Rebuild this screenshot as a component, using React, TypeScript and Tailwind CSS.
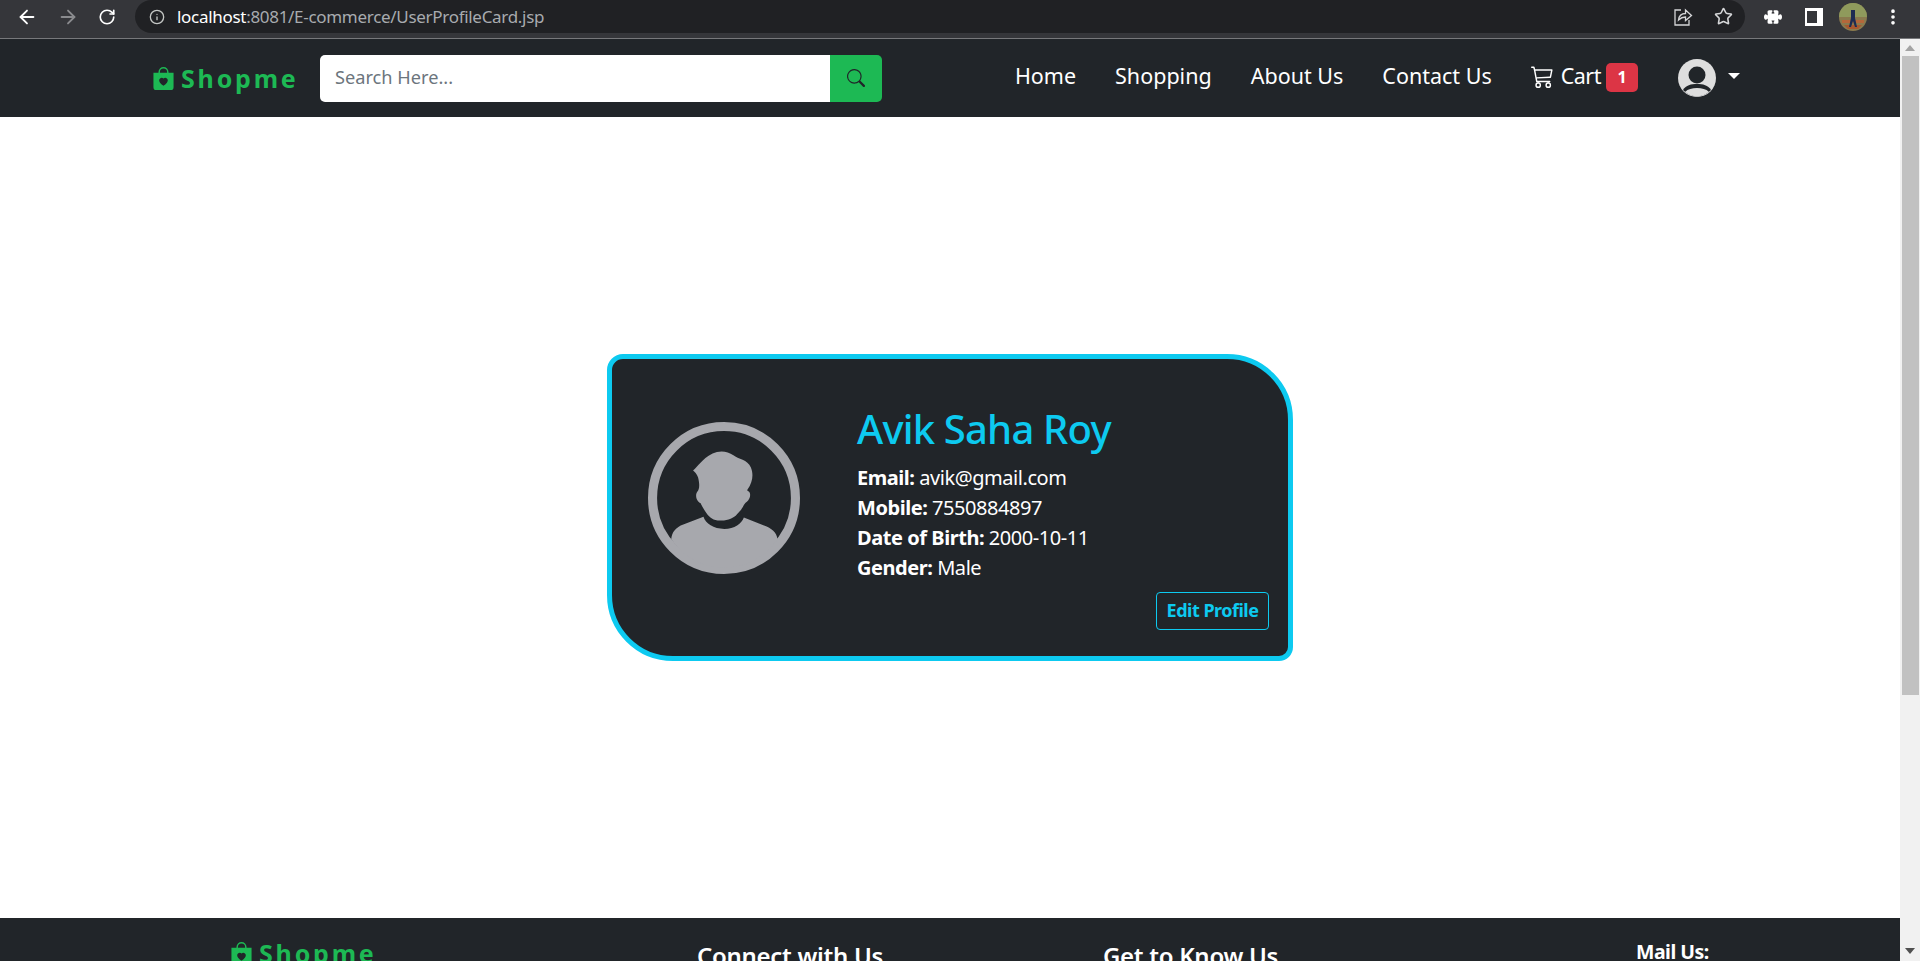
import { ArrowLeft, ArrowRight, RotateCw, Info, Star, EllipsisVertical } from 'lucide-react';
import { BsBagHeartFill, BsCart3, BsPuzzleFill, BsSearch } from 'react-icons/bs';

const links = ['Home', 'Shopping', 'About Us', 'Contact Us'];

const details = [
  { label: 'Email:', value: 'avik@gmail.com' },
  { label: 'Mobile:', value: '7550884897' },
  { label: 'Date of Birth:', value: '2000-10-11' },
  { label: 'Gender:', value: 'Male' },
];

function BrowserBar() {
  return (
    <div className="h-[39px] bg-[#35363a] border-b border-[#77787b] text-white shrink-0">
      <div className="h-[33px] flex items-center">
        <div className="flex items-center gap-[19px] pl-4 pr-[19px]">
          <ArrowLeft size={22} strokeWidth={2} />
          <ArrowRight size={22} strokeWidth={2} className="text-[#8a8b8e]" />
          <RotateCw size={18} strokeWidth={2.2} />
        </div>
        <div className="h-[33px] w-[1610px] rounded-full bg-[#202124] flex items-center pl-[14px] pr-[12px]">
          <Info size={16} className="text-[#c4c7c5] mr-[12px]" />
          <span className="text-[17px] tracking-[-0.3px]">
            localhost<span className="text-[#a8abaf]">:8081/E-commerce/UserProfileCard.jsp</span>
          </span>
          <div className="ml-auto flex items-center gap-[21px] text-[#d5d6d8]">
            <svg width="20" height="20" viewBox="0 0 20 20" fill="none" stroke="currentColor" strokeWidth="1.3">
              <path d="M8 3H2v15h14v-5" />
              <path d="M5.5 13c.5-4 3-6.5 7-6.5V3l6 5.5-6 5V10c-3 0-5 1-7 3z" />
            </svg>
            <Star size={19} strokeWidth={2} />
          </div>
        </div>
        <div className="flex items-center ml-[19px]">
          <BsPuzzleFill size={18} />
          <div className="ml-[23px] w-[18px] h-[18px] bg-white flex items-stretch">
            <div className="bg-[#35363a] w-[10px] my-[3px] ml-[2px]" />
          </div>
          <svg width="28" height="28" viewBox="0 0 28 28" className="ml-[16px]">
            <circle cx="14" cy="14" r="14" fill="#8a7a4e" />
            <path d="M0 14a14 14 0 0 1 28 0z" fill="#8f9a5c" />
            <path d="M3 17h22v3H3z" fill="#b5673a" />
            <path d="M5 22h18l-4 4H9z" fill="#a8572f" />
            <path d="M12 7h4v8l2 9h-2l-2-6-2 6h-2l2-9z" fill="#1c2c52" />
          </svg>
          <EllipsisVertical size={20} strokeWidth={2.4} className="ml-[16px]" />
        </div>
      </div>
    </div>
  );
}

function Logo({ width }: { width: string }) {
  return (
    <div className={`flex items-center font-bold text-[25px] leading-[34px] tracking-[2.8px] ${width}`}>
      <BsBagHeartFill className="text-[#1db954] w-[23px] h-[25px] shrink-0" />
      <span className="text-[#1db954] ml-[6px]">Shopme</span>
    </div>
  );
}

function UserAvatar() {
  return (
    <svg width="38" height="38" viewBox="0 0 38 38">
      <circle cx="19" cy="19" r="19" fill="#dedede" />
      <circle cx="19" cy="16" r="8.5" fill="#212529" />
      <path d="M5 31c3-5 8-6 14-6s11 1 14 6a19 19 0 0 1-28 0z" fill="#212529" />
      <path d="M7 33c3-3 7-4 12-4s9 1 12 4a19 19 0 0 1-24 0z" fill="#dedede" />
    </svg>
  );
}

function Navbar() {
  return (
    <nav className="h-[78px] bg-[#212529] flex items-center pl-[152px] pr-[160px] shrink-0">
      <Logo width="w-[168px]" />
      <div className="flex h-[47px] w-[562px] rounded-[5px] overflow-hidden">
        <div className="flex-1 bg-white pl-[15px] flex items-center text-[18.2px] text-[#6c757d]">Search Here...</div>
        <button className="w-[52px] bg-[#1db954] flex items-center justify-center text-[#212529]">
          <BsSearch size={18} />
        </button>
      </div>
      <div className="ml-auto flex items-center text-white text-[21.5px] -mt-[3px]">
        <div className="flex gap-[39px]">
          {links.map((link) => (
            <a key={link}>{link}</a>
          ))}
        </div>
        <a className="flex items-center ml-[39px]">
          <BsCart3 size={23} className="mr-[7px]" />
          <span className="tracking-[-0.5px]">Cart</span>
          <span className="ml-[5px] mt-[1px] w-[32px] h-[29px] rounded-[5px] bg-[#dc3545] text-[16px] font-bold flex items-center justify-center">1</span>
        </a>
        <div className="flex items-center ml-[40px] mt-[3px]">
          <UserAvatar />
          <span className="ml-[12px] -mt-[5px] border-x-[6px] border-x-transparent border-t-[6px] border-t-white" />
        </div>
      </div>
    </nav>
  );
}

function ProfileCard() {
  return (
    <div className="w-[686px] h-[307px] bg-[#212529] border-[5px] border-[#0dcaf0] rounded-tl-[16px] rounded-tr-[66px] rounded-br-[14px] rounded-bl-[66px] flex items-start">
      <div className="ml-[36px] mt-[63px] shrink-0">
        <svg width="152" height="152" viewBox="145 216 452 452">
          <circle cx="371" cy="442" r="212.5" fill="none" stroke="#a7a8ad" strokeWidth="27" />
          <path
            fill="#a7a8ad"
            d="M279 360c16-12 24-32 58-50 20-10 44-8 62 5 14 12 42 12 52 36 8 20 6 42-10 66-2 3 0 4 4 6 8 8 2 24-6 30-6 4-8 8-12 16-6 10-12 16-18 22-8 10-30 20-50 18-20-1-30-8-40-22-6-8-12-18-18-30-10-4-18-22-9-34 4-6 6-12 5-24-1-18-6-30-18-39z"
          />
          <path
            fill="#a7a8ad"
            d="M214 565c2-22 14-36 36-44l60-23c6 20 30 36 62 36 30 0 52-16 58-34l60 24c22 8 38 20 40 41a190 190 0 0 1-316 0z"
          />
        </svg>
      </div>
      <div className="ml-[57px] flex-1 flex flex-col pr-[19px] pt-[40px]">
        <h1 className="text-[40px] leading-[60px] font-medium text-[#0dcaf0] tracking-[-0.8px]">Avik Saha Roy</h1>
        <div className="mt-[4px] text-[20px] leading-[30px] text-white tracking-[-0.45px]">
          {details.map((d) => (
            <div key={d.label}>
              <b>{d.label}</b> {d.value}
            </div>
          ))}
        </div>
        <button className="self-end mt-[9px] h-[38px] w-[113px] border border-[#0dcaf0] rounded-[4px] text-[#0dcaf0] font-bold text-[18px] tracking-[-0.5px]">
          Edit Profile
        </button>
      </div>
    </div>
  );
}

function Footer() {
  return (
    <footer className="h-[43px] bg-[#212529] overflow-hidden flex text-white shrink-0">
      <div className="w-[697px] pl-[230px] pt-[18px]">
        <Logo width="w-fit" />
      </div>
      <div className="w-[406px] pt-[20px] text-[24px] font-semibold tracking-[-0.3px]">Connect with Us</div>
      <div className="w-[533px] pt-[20px] text-[24px] font-semibold tracking-[-0.3px]">Get to Know Us</div>
      <div className="pt-[22px] text-[19.5px] leading-[24px] font-bold tracking-[-0.5px]">Mail Us:</div>
    </footer>
  );
}

function Scrollbar() {
  return (
    <div className="w-[20px] bg-[#f1f1f1] flex flex-col items-center shrink-0">
      <span className="mt-[6px] border-x-[5px] border-x-transparent border-b-[6px] border-b-[#a3a3a3]" />
      <div className="mt-[5px] h-[639px] w-[17px] bg-[#c1c1c1]" />
      <span className="mt-auto mb-[7px] border-x-[5px] border-x-transparent border-t-[6px] border-t-[#505050]" />
    </div>
  );
}

export default function App() {
  return (
    <div className="h-screen overflow-hidden flex flex-col bg-white font-['Noto_Sans',sans-serif]">
      <BrowserBar />
      <div className="flex-1 flex min-h-0">
        <div className="flex-1 flex flex-col min-w-0">
          <Navbar />
          <main className="flex-1 flex items-center justify-center pb-[21px]">
            <ProfileCard />
          </main>
          <Footer />
        </div>
        <Scrollbar />
      </div>
    </div>
  );
}
